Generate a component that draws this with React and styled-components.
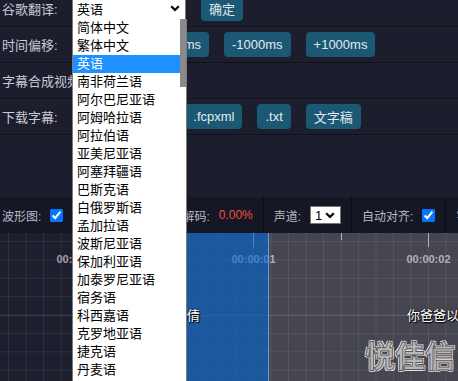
import React from "react";
import styled, { createGlobalStyle } from "styled-components";

const GlobalStyle = createGlobalStyle`
  html, body {
    margin: 0;
    padding: 0;
    background: #1c1e2e;
    overflow: hidden;
  }
  body {
    font-family: "Liberation Sans", "Noto Sans CJK SC", sans-serif;
  }
`;

const FONT = `"Liberation Sans", "Noto Sans CJK SC", sans-serif`;

const Page = styled.div`
  position: relative;
  width: 458px;
  height: 381px;
  overflow: hidden;
  background: #1c1e2e;
`;

const Settings = styled.div`
  margin-top: -9px;
`;

const Row = styled.div`
  display: flex;
  align-items: center;
  height: 35px;
  padding-left: 2px;
  border-bottom: 1px solid #10111a;
  white-space: nowrap;
`;

const Label = styled.span`
  flex: 0 0 70px;
  font-size: 13px;
  color: #c9cbd3;
`;

const Controls = styled.div`
  display: flex;
  align-items: center;
  gap: 15px;
`;

const Button = styled.button`
  height: 25px;
  padding: 0 8px;
  border: none;
  border-radius: 4px;
  background: #1b5874;
  color: #e3e9ee;
  font: 13px ${FONT};
  white-space: nowrap;
`;

const SelectBox = styled.div`
  display: flex;
  align-items: center;
  justify-content: space-between;
  box-sizing: border-box;
  width: ${(p) => p.$width}px;
  height: ${(p) => p.$height}px;
  padding: 0 5px 0 4px;
  background: #fff;
  border: 1px solid #767676;
  color: #000;
  font-size: 13px;
`;

const Spacer = styled.div`
  height: 62px;
`;

const Dropdown = styled.div`
  position: absolute;
  left: 72px;
  top: 19px;
  z-index: 10;
  display: flex;
  box-sizing: border-box;
  width: 115px;
  height: 370px;
  background: #fff;
  border: 1px solid #7a7a7a;
  border-top: none;
`;

const OptionList = styled.ul`
  flex: 1;
  margin: 0;
  padding: 0;
  list-style: none;
`;

const Option = styled.li`
  height: 18px;
  line-height: 18px;
  padding-left: 4px;
  font-size: 13px;
  white-space: nowrap;
  color: ${(p) => (p.$active ? "#fff" : "#000")};
  background: ${(p) => (p.$active ? "#1e90ff" : "transparent")};
`;

const ScrollTrack = styled.div`
  width: 6px;
  background: #fff;
`;

const ScrollThumb = styled.div`
  height: 68px;
  background: #8a8a8a;
`;

const Toolbar = styled.div`
  display: flex;
  height: 36px;
  background: #151724;
  white-space: nowrap;
  overflow: hidden;
`;

const ToolGroup = styled.div`
  display: flex;
  flex-shrink: 0;
  align-items: center;
  gap: 9px;
  padding: 0 10px;
  border-right: 1px solid #0b0c13;
  font-size: 12px;
  color: #b8bac4;

  &:first-child {
    padding-left: 2px;
  }
`;

const Check = styled.input.attrs({ type: "checkbox" })`
  width: 13px;
  height: 13px;
  margin: 0;
`;

const Value = styled.span`
  color: ${(p) => p.$color || "#b8bac4"};
`;

const Timeline = styled.div`
  position: relative;
  height: 148px;
  overflow: hidden;
  background: #1d1f2e;
`;

const AudioTrack = styled.div`
  position: absolute;
  top: 0;
  bottom: 0;
  left: 78px;
  right: 0;
  background: #45464f;
`;

const Grid = styled.div`
  position: absolute;
  inset: 0;
  background-image: linear-gradient(to right, rgba(255, 255, 255, 0.07) 1px, transparent 1px),
    linear-gradient(to bottom, rgba(255, 255, 255, 0.07) 1px, transparent 1px);
  background-size: 17.5px 18.4px;
  background-position: 8px 8px;
`;

const CenterLine = styled.div`
  position: absolute;
  left: 0;
  right: 0;
  top: 82px;
  height: 1px;
  background: rgba(255, 255, 255, 0.1);
`;

const Tick = styled.div`
  position: absolute;
  top: 0;
  width: 1px;
  height: ${(p) => (p.$major ? 14 : 7)}px;
  background: #b4b4bc;
`;

const TimeLabel = styled.span`
  position: absolute;
  top: 20px;
  transform: translateX(-50%);
  font: bold 11px/12px ${FONT};
  color: rgba(255, 255, 255, 0.58);
`;

const Region = styled.div`
  position: absolute;
  top: 0;
  bottom: 0;
  left: 110px;
  width: 158px;
  background: rgba(0, 100, 210, 0.6);
  border-right: 1px solid rgba(140, 190, 240, 0.7);
`;

const Caption = styled.span`
  position: absolute;
  top: 74px;
  font-size: 13px;
  line-height: 18px;
  color: #fff;
  white-space: nowrap;
  text-shadow: 0 0 2px #000, 1px 1px 1px #000;
`;

const Watermark = styled.span`
  position: absolute;
  left: 365px;
  top: 103px;
  font: bold 30px/36px "Noto Sans CJK SC", sans-serif;
  color: #bcb7b7;
  -webkit-text-stroke: 1px #5a5a5a;
  text-shadow: 1px 1px 0 #fff, -1px -1px 0 #fff, 1px -1px 0 #fff, -1px 1px 0 #fff;
  white-space: nowrap;
`;

const Chevron = () => (
  <svg width="10" height="7" viewBox="0 0 10 7">
    <polyline points="1.2,1.2 5,5 8.8,1.2" fill="none" stroke="#000" strokeWidth="2.2" />
  </svg>
);

const languages = [
  "简体中文", "繁体中文", "英语", "南非荷兰语", "阿尔巴尼亚语", "阿姆哈拉语",
  "阿拉伯语", "亚美尼亚语", "阿塞拜疆语", "巴斯克语", "白俄罗斯语", "孟加拉语",
  "波斯尼亚语", "保加利亚语", "加泰罗尼亚语", "宿务语", "科西嘉语", "克罗地亚语",
  "捷克语", "丹麦语", "荷兰语",
];

const SECOND = 175;
const ZERO = 78;

const App = () => {
  const seconds = [0, 1, 2];

  return (
    <Page>
      <GlobalStyle />
      <Settings>
        <Row>
          <Label>谷歌翻译:</Label>
          <Controls>
            <SelectBox $width={114} $height={22}>
              <span>英语</span>
              <Chevron />
            </SelectBox>
            <Button>确定</Button>
          </Controls>
        </Row>
        <Row>
          <Label>时间偏移:</Label>
          <Controls>
            <Button>-100ms</Button>
            <Button>+100ms</Button>
            <Button>-1000ms</Button>
            <Button>+1000ms</Button>
          </Controls>
        </Row>
        <Row>
          <Label>字幕合成视频:</Label>
        </Row>
        <Row>
          <Label>下载字幕:</Label>
          <Controls>
            <Button>.json</Button>
            <Button>.ass</Button>
            <Button>.fcpxml</Button>
            <Button>.txt</Button>
            <Button>文字稿</Button>
          </Controls>
        </Row>
      </Settings>

      <Spacer />

      <Toolbar>
        <ToolGroup>
          波形图:
          <Check defaultChecked />
        </ToolGroup>
        <ToolGroup>
          缩放:
          <Value>1.0</Value>
        </ToolGroup>
        <ToolGroup>
          音频解码:
          <Value $color="#f0503a">0.00%</Value>
        </ToolGroup>
        <ToolGroup>
          声道:
          <SelectBox $width={31} $height={18}>
            <span>1</span>
            <Chevron />
          </SelectBox>
        </ToolGroup>
        <ToolGroup>
          自动对齐:
          <Check defaultChecked />
        </ToolGroup>
        <ToolGroup>字幕样式:</ToolGroup>
      </Toolbar>

      <Timeline>
        <AudioTrack />
        <Grid />
        <CenterLine />
        {seconds.map((s) => (
          <React.Fragment key={s}>
            <Tick $major style={{ left: ZERO + s * SECOND }} />
            <Tick style={{ left: ZERO + (s + 0.5) * SECOND }} />
            <TimeLabel style={{ left: ZERO + s * SECOND + 0.5 }}>
              {`00:00:0${s}`}
            </TimeLabel>
          </React.Fragment>
        ))}
        <Region />
        <Caption style={{ left: 174 }}>小倩</Caption>
        <Caption style={{ left: 407 }}>你爸爸以前</Caption>
        <Watermark>悦佳信</Watermark>
      </Timeline>

      <Dropdown>
        <OptionList>
          {languages.map((lang) => (
            <Option key={lang} $active={lang === "英语"}>
              {lang}
            </Option>
          ))}
        </OptionList>
        <ScrollTrack>
          <ScrollThumb />
        </ScrollTrack>
      </Dropdown>
    </Page>
  );
};

export default App;
